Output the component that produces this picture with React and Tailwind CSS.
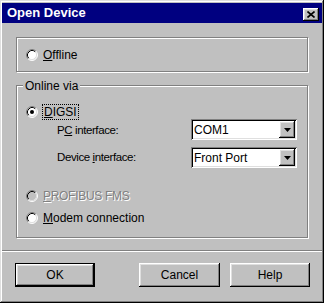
const raised =
  'shadow-[inset_-1px_-1px_#000,inset_1px_1px_#fff,inset_-2px_-2px_#808080,inset_2px_2px_#dfdfdf]';
const sunken =
  'shadow-[inset_1px_1px_#808080,inset_-1px_-1px_#fff,inset_2px_2px_#000,inset_-2px_-2px_#dfdfdf]';

function Radio({ checked = false, disabled = false }) {
  return (
    <svg width="12" height="12" viewBox="0 0 12 12" className="shrink-0">
      <circle cx="6" cy="6" r="5" fill={disabled ? '#c0c0c0' : '#fff'} />
      <path d="M2.11 9.89 A5.5 5.5 0 0 1 9.89 2.11" fill="none" stroke="#808080" strokeWidth="1" />
      <path d="M9.89 2.11 A5.5 5.5 0 0 1 2.11 9.89" fill="none" stroke="#fff" strokeWidth="1" />
      <path d="M2.82 9.18 A4.5 4.5 0 0 1 9.18 2.82" fill="none" stroke="#000" strokeWidth="1" />
      <path d="M9.18 2.82 A4.5 4.5 0 0 1 2.82 9.18" fill="none" stroke="#dfdfdf" strokeWidth="1" />
      {checked && <circle cx="6" cy="6" r="2" fill="#000" />}
    </svg>
  );
}

function Combo({ value }) {
  return (
    <div className={`flex h-[21px] w-[106px] items-center bg-white pl-[3px] pr-[2px] ${sunken}`}>
      <span className="flex-1 text-[12px] leading-none">{value}</span>
      <div className={`flex h-[17px] w-[16px] items-center justify-center bg-[#c0c0c0] ${raised}`}>
        <svg width="7" height="4" viewBox="0 0 7 4">
          <path d="M0 0h7L3.5 4z" fill="#000" />
        </svg>
      </div>
    </div>
  );
}

function Button({ children, isDefault, className = '' }) {
  return (
    <div
      className={`flex h-[24px] w-[80px] items-center justify-center bg-[#c0c0c0] text-[12px] ${
        isDefault ? 'border border-black' : ''
      } ${className}`}
    >
      <div className={`flex h-full w-full items-center justify-center ${raised}`}>{children}</div>
    </div>
  );
}

const etched = 'border border-[#808080] shadow-[inset_1px_1px_#fff,1px_1px_#fff]';

export default function App() {
  return (
    <div
      className="flex h-[303px] w-[324px] flex-col bg-[#c0c0c0] p-[2px] text-black shadow-[inset_-1px_-1px_#000,inset_1px_1px_#dfdfdf,inset_-2px_-2px_#808080,inset_2px_2px_#fff]"
      style={{ fontFamily: '"Liberation Sans", Arial, sans-serif' }}
    >
      {/* title bar */}
      <div className="mt-[1px] flex h-[20px] items-center bg-[#000080] pl-[5px] pr-[3px]">
        <span className="flex-1 text-[13px] font-bold text-white">Open Device</span>
        <div className={`mt-[2px] flex h-[13px] w-[16px] items-center justify-center bg-[#c0c0c0] ${raised}`}>
          <svg width="8" height="7" viewBox="0 0 8 7">
            <path d="M0.5 0.5L7.5 6.5M7.5 0.5L0.5 6.5" stroke="#000" strokeWidth="1.6" />
          </svg>
        </div>
      </div>

      <div className="flex flex-col px-[14px]">
        {/* Offline group */}
        <div className={`mt-[14px] flex h-[35px] items-center pl-[9px] ${etched}`}>
          <Radio />
          <span className="ml-[5px] text-[12px]">
            <u>O</u>ffline
          </span>
        </div>

        {/* Online via group */}
        <div className={`relative mt-[13px] flex h-[153px] flex-col ${etched}`}>
          <span className="absolute -top-[9px] left-[6px] bg-[#c0c0c0] px-[2px] text-[12px]">Online via</span>

          <div className="mt-[18px] flex h-[16px] items-center pl-[9px]">
            <Radio checked />
            <span className="ml-[4px] border border-dotted border-black px-[1px] text-[12px] leading-[14px]">
              <u>D</u>IGSI
            </span>
          </div>

          <div className="mt-[-1px] flex items-center pl-[40px] pr-[10px]">
            <span className="mt-[3px] flex-1 text-[11.5px] tracking-[-0.4px]">
              P<u>C</u> interface:
            </span>
            <Combo value="COM1" />
          </div>

          <div className="mt-[7px] flex items-center pl-[40px] pr-[10px]">
            <span className="flex-1 text-[11.5px] tracking-[-0.4px]">
              Device <u>i</u>nterface:
            </span>
            <Combo value="Front Port" />
          </div>

          <div className="mt-[20px] flex h-[16px] items-center pl-[9px]">
            <Radio disabled />
            <span className="ml-[5px] text-[12px] tracking-[-0.3px] text-[#808080] [text-shadow:1px_1px_0_#fff]">
              <u>P</u>ROFIBUS FMS
            </span>
          </div>

          <div className="mt-[6px] flex h-[16px] items-center pl-[9px]">
            <Radio />
            <span className="ml-[5px] text-[12px]">
              <u>M</u>odem connection
            </span>
          </div>
        </div>
      </div>

      {/* separator */}
      <div className="mt-[12px] h-[2px] border-t border-b border-t-[#808080] border-b-white" />

      {/* buttons */}
      <div className="mt-[11px] flex pl-[13px] pr-[12px]">
        <Button isDefault>OK</Button>
        <div className="flex-1" />
        <Button className="w-[81px]">Cancel</Button>
        <Button className="ml-[10px]">Help</Button>
      </div>
    </div>
  );
}
